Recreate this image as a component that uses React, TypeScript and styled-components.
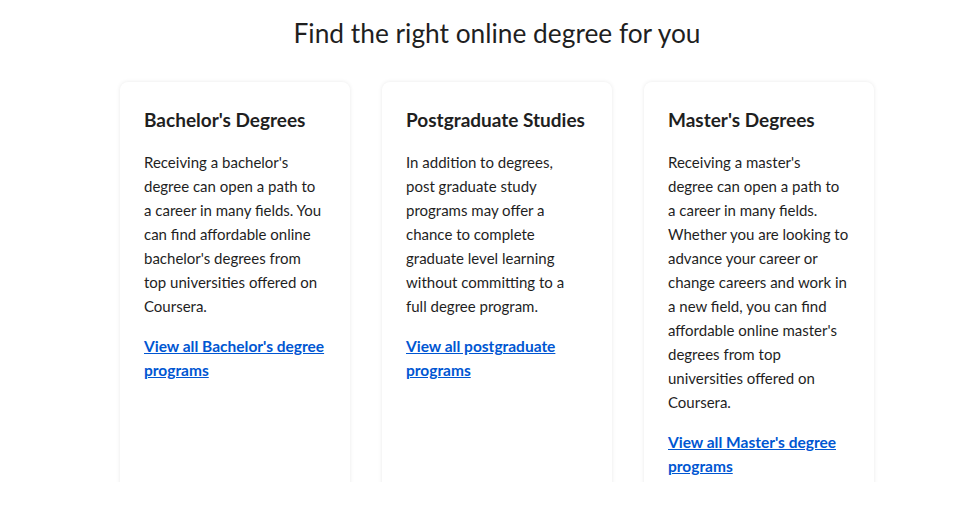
import React from 'react';
import styled, { createGlobalStyle } from 'styled-components';

const GlobalStyle = createGlobalStyle`
  html, body {
    margin: 0;
    padding: 0;
    background: #ffffff;
  }
  body {
    font-family: Lato, "Noto Sans", "Liberation Sans", sans-serif;
    color: #1f1f1f;
  }
`;

const Section = styled.section`
  height: 482px;
  overflow: hidden;
  padding-left: 20px;
  box-sizing: border-box;
`;

const Title = styled.h2`
  margin: 0;
  padding-top: 16px;
  text-align: center;
  font-size: 26.3px;
  line-height: 34px;
  font-weight: 400;
  color: #1f1f1f;
`;

const CardRow = styled.div`
  display: grid;
  grid-template-columns: repeat(3, 230px);
  justify-content: center;
  gap: 32px;
  margin-top: 32px;
`;

const Card = styled.article`
  background: #ffffff;
  border-radius: 8px 8px 0 0;
  box-shadow: 0 0 4px rgba(0, 0, 0, 0.09);
  padding: 24px 24px 40px;
  min-height: 500px;
`;

const CardTitle = styled.h3`
  margin: 0 0 16px;
  font-size: 19px;
  line-height: 28px;
  font-weight: 700;
  color: #1f1f1f;
`;

// lines are kept as in the design, so the breaks fall in the same places
const CardText = styled.p`
  margin: 0 0 16px;
  font-size: 15px;
  line-height: 24px;
  white-space: pre;
  color: #1f1f1f;
`;

const CardLink = styled.a`
  display: block;
  font-size: 15.5px;
  line-height: 24px;
  font-weight: 700;
  color: #0056d2;
  text-decoration: underline;
  cursor: pointer;
`;

const degrees = [
  {
    title: "Bachelor's Degrees",
    text: "Receiving a bachelor's\ndegree can open a path to\na career in many fields. You\ncan find affordable online\nbachelor's degrees from\ntop universities offered on\nCoursera.",
    link: "View all Bachelor's degree programs",
  },
  {
    title: 'Postgraduate Studies',
    text: 'In addition to degrees,\npost graduate study\nprograms may offer a\nchance to complete\ngraduate level learning\nwithout committing to a\nfull degree program.',
    link: 'View all postgraduate programs',
  },
  {
    title: "Master's Degrees",
    text: "Receiving a master's\ndegree can open a path to\na career in many fields.\nWhether you are looking to\nadvance your career or\nchange careers and work in\na new field, you can find\naffordable online master's\ndegrees from top\nuniversities offered on\nCoursera.",
    link: "View all Master's degree programs",
  },
];

const App: React.FC = () => (
  <>
    <GlobalStyle />
    <Section>
      <Title>Find the right online degree for you</Title>
      <CardRow>
        {degrees.map(d => (
          <Card key={d.title}>
            <CardTitle>{d.title}</CardTitle>
            <CardText>{d.text}</CardText>
            <CardLink>{d.link}</CardLink>
          </Card>
        ))}
      </CardRow>
    </Section>
  </>
);

export default App;
